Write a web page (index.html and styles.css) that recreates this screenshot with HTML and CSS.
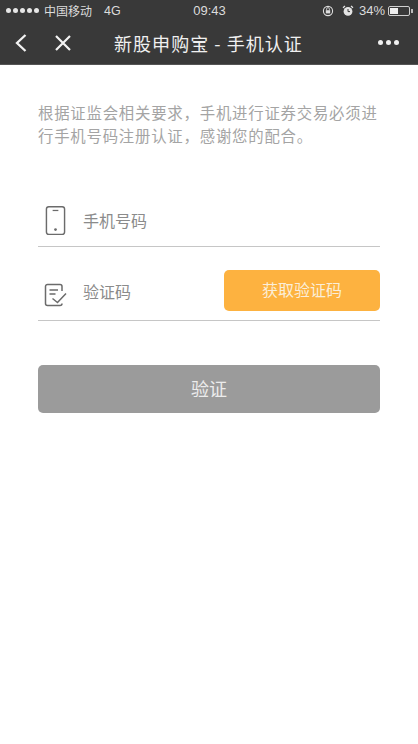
FILE: index.html
```html
<!DOCTYPE html>
<html lang="zh">
<head>
<meta charset="utf-8">
<title>手机认证</title>
<link rel="stylesheet" href="styles.css">
</head>
<body>
<header class="top">
  <div class="status">
    <div class="status-left">
      <span class="dots"><i></i><i></i><i></i><i></i><i></i></span>
      <span class="carrier">中国移动</span>
      <span class="net">4G</span>
    </div>
    <div class="time">09:43</div>
    <div class="status-right">
      <svg class="s-icon" viewBox="0 0 12 12"><circle cx="6" cy="6" r="4.6" fill="none" stroke="#ddd" stroke-width="1.1"/><rect x="3.8" y="5.2" width="4.4" height="3.2" fill="#ddd"/><path d="M4.6 5.2V4a1.4 1.4 0 0 1 2.8 0v1.2" fill="none" stroke="#ddd" stroke-width=".8"/></svg>
      <svg class="s-icon alarm" viewBox="0 0 12 12"><circle cx="6" cy="6.4" r="4.4" fill="#e4e4e4"/><path d="M6 4v2.6h2" fill="none" stroke="#3a3a3a" stroke-width="1"/><path d="M1 2.8 3 1M11 2.8 9 1" stroke="#e4e4e4" stroke-width="1.2"/></svg>
      <span class="pct">34%</span>
      <span class="battery"><span class="level"></span></span><span class="nub"></span>
    </div>
  </div>
  <nav class="nav">
    <div class="nav-left">
      <svg class="back" viewBox="0 0 14 20"><path d="M11.5 2 3 10l8.500 8" fill="none" stroke="#f2f2f2" stroke-width="2.300"/></svg>
      <svg class="close" viewBox="0 0 18 18"><path d="M2 2l14 14M16 2 2 16" fill="none" stroke="#f2f2f2" stroke-width="2.200"/></svg>
    </div>
    <h1 class="title">新股申购宝 - 手机认证</h1>
    <div class="more"><i></i><i></i><i></i></div>
  </nav>
</header>
<main class="content">
  <p class="intro">根据证监会相关要求，手机进行证券交易必须进行手机号码注册认证，感谢您的配合。</p>
  <div class="field field-phone">
    <svg class="f-icon" viewBox="0 0 22 32"><rect x="1.500" y="1.500" width="19" height="29" rx="2.500" fill="none" stroke="#6b6b6b" stroke-width="1.500"/><path d="M8 5.500h6" stroke="#6b6b6b" stroke-width="1.300"/><circle cx="11" cy="25.500" r="1.400" fill="#6b6b6b"/></svg>
    <span class="label">手机号码</span>
  </div>
  <div class="field field-code">
    <svg class="f-icon code-icon" viewBox="0 0 24 24"><path d="M18 8V3.500a2 2 0 0 0-2-2H3.500a2 2 0 0 0-2 2v17a2 2 0 0 0 2 2H16a2 2 0 0 0 2-2" fill="none" stroke="#6b6b6b" stroke-width="1.500"/><path d="M5.500 7h8.500M5.500 11h6" stroke="#6b6b6b" stroke-width="1.400"/><path d="M8.500 15.500l5 4 8.500-9" fill="none" stroke="#6b6b6b" stroke-width="1.500"/></svg>
    <span class="label">验证码</span>
    <button class="get-code" type="button">获取验证码</button>
  </div>
  <button class="verify" type="button">验证</button>
</main>
</body>
</html>
```
FILE: styles.css
```css
* { box-sizing: border-box; }
html, body { margin: 0; height: 100%; }
body {
  width: 418px;
  height: 744px;
  overflow: hidden;
  background: #fff;
  font-family: "Noto Sans CJK SC", "Liberation Sans", sans-serif;
}
.top { background: #393939; height: 65px; border-bottom: 1px solid #555; }
.status {
  height: 21px;
  display: grid;
  grid-template-columns: 1fr auto 1fr;
  align-items: center;
  color: #dcdcdc;
  font-size: 12px;
  padding: 0 5px 0 6px;
}
.status-left { display: flex; align-items: center; }
.dots { display: flex; gap: 2px; margin-right: 5px; }
.dots i { width: 5px; height: 5px; border-radius: 50%; background: #e6e6e6; }
.carrier { font-size: 12px; }
.net { margin-left: 12px; font-family: "Liberation Sans", sans-serif; font-size: 12.500px; }
.time { font-family: "Liberation Sans", sans-serif; font-size: 13px; }
.status-right { display: flex; align-items: center; justify-content: flex-end; }
.s-icon { width: 12px; height: 12px; margin-right: 8px; }
.alarm { margin-right: 5px; }
.pct { font-family: "Liberation Sans", sans-serif; font-size: 13px; margin-right: 3px; }
.battery { width: 22px; height: 10px; border: 1px solid #cfcfcf; border-radius: 2px; padding: 1px; display: block; }
.level { display: block; width: 8px; height: 100%; background: #eee; }
.nub { width: 2px; height: 4px; background: #bbb; margin-left: 1px; }
.nav {
  height: 43px;
  display: flex;
  align-items: center;
  padding: 0 19px 0 14px;
}
.nav-left { display: flex; align-items: center; gap: 26px; width: 95px; }
.back { width: 14px; height: 20px; }
.close { width: 18px; height: 18px; }
.title {
  margin: 0;
  flex: 1;
  color: #f0f0f0;
  font-size: 18px;
  font-weight: 400;
  letter-spacing: 1.05px;
  white-space: nowrap;
  padding-left: 5px;
}
.more { display: flex; gap: 3px; }
.more i { width: 5px; height: 5px; border-radius: 50%; background: #f0f0f0; }
.content { padding: 36px 38px 0 38px; }
.intro {
  margin: 0;
  color: #a4a4a4;
  font-size: 15.400px;
  line-height: 23px;
  letter-spacing: .78px;
}
.field {
  display: flex;
  align-items: center;
  border-bottom: 1.500px solid #c6c6c6;
}
.field-phone { margin-top: 33px; height: 67px; padding: 15px 0 0 7px; }
.field-code { height: 74px; padding: 14px 0 0 6px; }
.f-icon { width: 21px; height: 31px; flex: none; }
.code-icon { width: 24px; height: 24px; margin-top: 8px; }
.label { color: #8b8b8b; font-size: 16px; margin-left: 17px; padding-bottom: 2px; }
.field-code .label { margin-left: 15px; margin-top: 3px; }
.get-code {
  margin-left: auto;
  width: 156px;
  height: 41px;
  border: 0;
  border-radius: 5px;
  background: #fdb240;
  color: #fbeed8;
  font-family: inherit;
  font-size: 16px;
  padding: 0 0 3px;
}
.verify {
  display: block;
  width: 100%;
  height: 48px;
  margin-top: 44px;
  border: 0;
  border-radius: 5px;
  background: #9b9b9b;
  color: #ececec;
  font-family: inherit;
  font-size: 18px;
  padding: 0 0 2px;
}
```
